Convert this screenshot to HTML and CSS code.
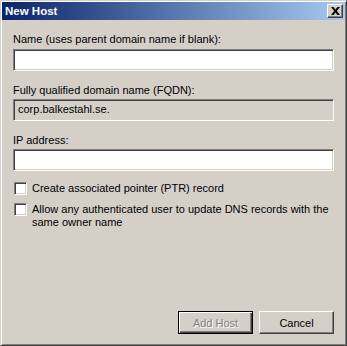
FILE: index.html
```html
<html>

<head>
    <meta charset="utf-8" />
    <link rel="stylesheet" href="styles.css">
</head>

<body>
    <div class="window">
        <div class="titlebar">
            <span class="title">New Host</span>
            <div class="close">
                <svg width="9" height="8" viewBox="0 0 9 8">
                    <path d="M0 0h2.5l2 2.6L6.5 0H9L5.8 4 9 8H6.5l-2-2.6L2.5 8H0l3.2-4z" fill="#000" />
                </svg>
            </div>
        </div>

        <div class="content">
            <div class="label">Name (uses parent domain name if blank):</div>
            <div class="field"></div>

            <div class="label gap">Fully qualified domain name (FQDN):</div>
            <div class="field readonly">corp.balkestahl.se.</div>

            <div class="label gap">IP address:</div>
            <div class="field"></div>

            <div class="check first">
                <div class="box"></div>
                <div class="text">Create associated pointer (PTR) record</div>
            </div>
            <div class="check">
                <div class="box"></div>
                <div class="text">Allow any authenticated user to update DNS records with the same owner name</div>
            </div>

            <div class="buttons">
                <div class="button default">Add Host</div>
                <div class="button">Cancel</div>
            </div>
        </div>
    </div>
</body>
</html>
```

FILE: styles.css
```css
body {
    margin: 0;
    font-family: "Liberation Sans", Arial, sans-serif;
    font-size: 11px;
    color: #000000;
}

.window {
    box-sizing: border-box;
    width: 347px;
    height: 346px;
    padding: 1px;
    background-color: #d4d0c8;
    border: 1px solid;
    border-color: #d4d0c8 #404040 #404040 #d4d0c8;
    box-shadow: inset 1px 1px 0 #ffffff, inset -1px -1px 0 #808080;
    display: flex;
    flex-direction: column;
}

.titlebar {
    height: 18px;
    padding: 0 2px 0 3px;
    background: linear-gradient(to right, #0a246a, #a6caf0);
    display: flex;
    align-items: center;
    justify-content: space-between;
}

.title {
    color: #ffffff;
    font-weight: bold;
    font-size: 11.5px;
}

.close {
    box-sizing: border-box;
    width: 16px;
    height: 14px;
    background-color: #d4d0c8;
    border: 1px solid;
    border-color: #ffffff #404040 #404040 #ffffff;
    box-shadow: inset -1px -1px 0 #808080;
    display: flex;
    align-items: center;
    justify-content: center;
}

.content {
    flex: 1;
    padding: 13px 11px 10px 11px;
    display: flex;
    flex-direction: column;
}

.label {
    line-height: 13px;
    margin-bottom: 3px;
}

.label.gap {
    margin-top: 13px;
    margin-bottom: 2px;
}

.field {
    box-sizing: border-box;
    height: 22px;
    padding: 0 4px;
    line-height: 18px;
    background-color: #ffffff;
    border: 1px solid;
    border-color: #808080 #ffffff #ffffff #808080;
    box-shadow: inset 1px 1px 0 #404040, inset -1px -1px 0 #d4d0c8;
}

.field.readonly {
    background-color: #d4d0c8;
}

.check {
    display: flex;
    gap: 5px;
    margin-top: 8px;
    line-height: 13px;
}

.check.first {
    margin-top: 11px;
}

.box {
    box-sizing: border-box;
    flex: none;
    width: 13px;
    height: 13px;
    margin-left: 1px;
    background-color: #ffffff;
    border: 1px solid;
    border-color: #808080 #ffffff #ffffff #808080;
    box-shadow: inset 1px 1px 0 #404040, inset -1px -1px 0 #d4d0c8;
}

.buttons {
    margin-top: auto;
    display: flex;
    justify-content: flex-end;
    gap: 6px;
}

.button {
    box-sizing: border-box;
    width: 75px;
    height: 23px;
    border: 1px solid;
    border-color: #ffffff #404040 #404040 #ffffff;
    box-shadow: inset -1px -1px 0 #808080;
    display: flex;
    align-items: center;
    justify-content: center;
}

.button.default {
    border-color: #000000;
    box-shadow: inset 1px 1px 0 #ffffff, inset -1px -1px 0 #404040, inset -2px -2px 0 #808080;
    color: #808080;
    text-shadow: 1px 1px 0 #ffffff;
}
```
